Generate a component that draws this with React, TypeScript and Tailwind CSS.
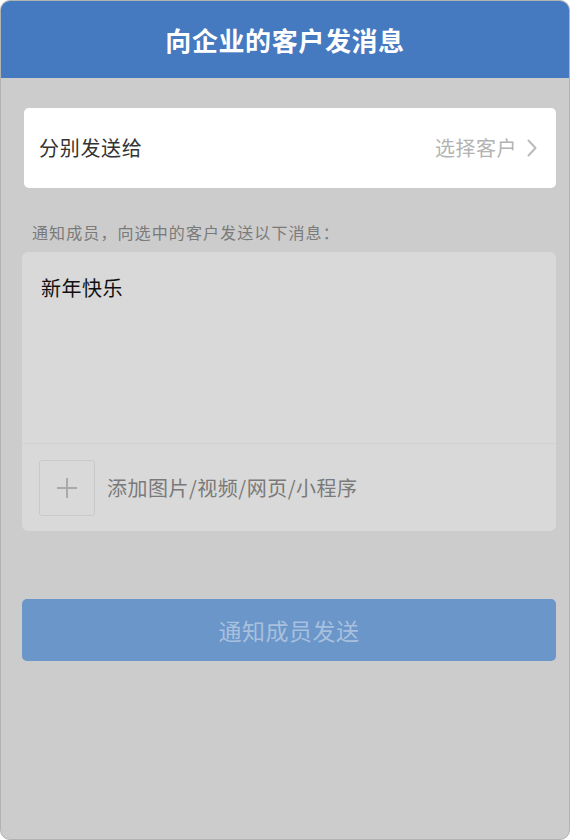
import React from 'react';

const ChevronRight = () => (
  <svg width="12" height="20" viewBox="0 0 12 20" fill="none" className="ml-[9px]">
    <path d="M2.5 2.5l7 7.5-7 7.5" stroke="#bbbbbb" strokeWidth="2" strokeLinecap="round" strokeLinejoin="round" />
  </svg>
);

const App = () => {
  return (
    <div
      className="w-[570px] h-[840px] bg-[#cccccc] border border-[#b3b3b3] rounded-[10px] overflow-hidden flex flex-col"
      style={{ fontFamily: '"Noto Sans CJK SC", "Noto Sans", sans-serif' }}
    >
      {/* header */}
      <div className="h-[77px] bg-[#4579c0] flex items-center justify-center shrink-0">
        <h1 className="text-white text-[26px] font-semibold leading-none tracking-[0.6px]">向企业的客户发消息</h1>
      </div>

      <div className="flex flex-col pl-[21px] pr-[13px]">
        {/* recipients */}
        <div className="mt-[30px] ml-[2px] h-[80px] bg-white rounded-[5px] flex items-center justify-between pl-[15px] pr-[18px]">
          <span className="text-[20px] text-[#333333] tracking-[0.7px]">分别发送给</span>
          <div className="flex items-center">
            <span className="text-[20px] text-[#b3b3b3] tracking-[0.5px]">选择客户</span>
            <ChevronRight />
          </div>
        </div>

        {/* hint */}
        <p className="mt-[32px] pl-[10px] text-[16px] leading-[24px] text-[#7a7a7a] tracking-[1.1px]">
          通知成员，向选中的客户发送以下消息：
        </p>

        {/* message card */}
        <div className="mt-[8px] bg-[#d9d9d9] rounded-[6px] flex flex-col">
          <div className="h-[191px] pt-[22px] px-[19px]">
            <p className="text-[20px] leading-[28px] text-[#111111] tracking-[0.5px]">新年快乐</p>
          </div>
          <div className="h-px bg-[#d1d1d1]" />
          <div className="h-[87px] flex items-center pl-[17px]">
            <div className="w-[56px] h-[56px] border border-[#c9c9c9] rounded-[3px] flex items-center justify-center">
              <svg width="22" height="22" viewBox="0 0 22 22">
                <path d="M11 1v20M1 11h20" stroke="#a9a9a9" strokeWidth="2" />
              </svg>
            </div>
            <span className="ml-[12px] text-[20px] text-[#7a7a7a] tracking-[0.5px]">添加图片/视频/网页/小程序</span>
          </div>
        </div>

        {/* submit */}
        <button className="mt-[68px] h-[62px] bg-[#6a96ca] rounded-[5px] flex items-center justify-center">
          <span className="text-[23px] text-[#a8c0dd] tracking-[0.5px]">通知成员发送</span>
        </button>
      </div>
    </div>
  );
};

export default App;
